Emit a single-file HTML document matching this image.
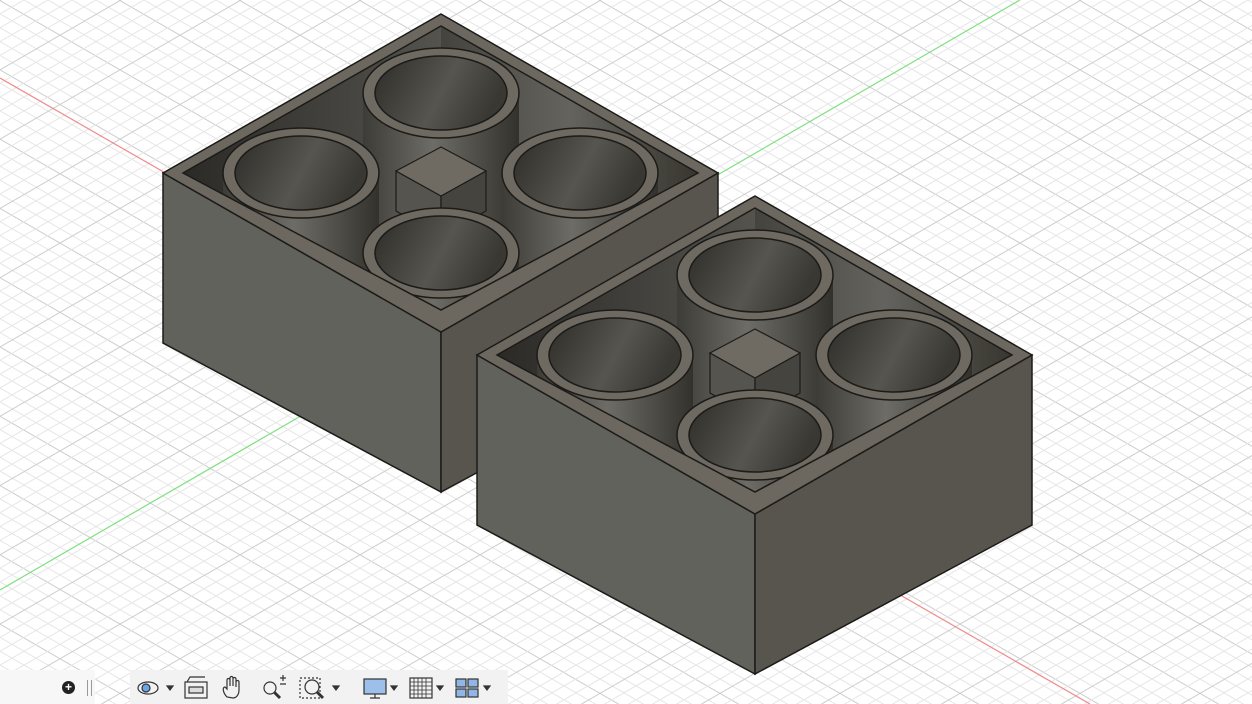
<!DOCTYPE html>
<html><head><meta charset="utf-8"><style>
html,body{margin:0;padding:0;width:1252px;height:704px;overflow:hidden;background:#fff;font-family:"Liberation Sans",sans-serif}
svg{position:absolute;left:0;top:0}
.tb{position:absolute;top:670px;height:34px;background:#f2f2f2}
</style></head><body>
<svg width="1252" height="704" viewBox="0 0 1252 704">
<defs>
<pattern id="g" width="2000" height="60" patternUnits="userSpaceOnUse">
<rect width="2000" height="60" fill="none"/>
<g stroke="#e6e6e6" stroke-width="1">
<line x1="0" y1="12" x2="2000" y2="12"/><line x1="0" y1="24" x2="2000" y2="24"/><line x1="0" y1="36" x2="2000" y2="36"/><line x1="0" y1="48" x2="2000" y2="48"/>
</g>
<line x1="0" y1="0.5" x2="2000" y2="0.5" stroke="#cdcdcd" stroke-width="1"/>
</pattern>
<pattern id="g1" href="#g" patternTransform="rotate(30)"/>
<pattern id="g2" href="#g" patternTransform="rotate(-30)"/>
<linearGradient id="cyl" x1="0" x2="1" y1="0" y2="0">
<stop offset="0" stop-color="#3e3c37"/><stop offset="0.45" stop-color="#6e6c66"/><stop offset="1" stop-color="#33312c"/>
</linearGradient>
<linearGradient id="hole" x1="0" x2="1" y1="0" y2="0.3">
<stop offset="0" stop-color="#2e2c28"/><stop offset="0.6" stop-color="#57554f"/><stop offset="1" stop-color="#3a3833"/>
</linearGradient>
<linearGradient id="inL" x1="0" x2="1" y1="0" y2="0">
<stop offset="0" stop-color="#2c2a26"/><stop offset="1" stop-color="#55534e"/>
</linearGradient>
<linearGradient id="inR" x1="0" x2="1" y1="0" y2="0">
<stop offset="0" stop-color="#45433e"/><stop offset="0.5" stop-color="#65635e"/><stop offset="1" stop-color="#38362f"/>
</linearGradient>
<clipPath id="inner"><polygon points="0,12 257,159 0,296 -258,159"/></clipPath>
<g id="cylinder">
<rect x="-78" y="0" width="156" height="160" fill="url(#cyl)"/>
<ellipse cx="0" cy="0" rx="78" ry="45" fill="#6e6a62" stroke="#1c1b18" stroke-width="1.5"/>
<ellipse cx="0" cy="0" rx="66" ry="37" fill="url(#hole)" stroke="#1c1b18" stroke-width="1.5"/>
</g>
<g id="box">
<polygon points="0,0 277,159 277,329 0,478 -278,329 -278,159" fill="#55524c"/>
<polygon points="-278,159 0,318 0,478 -278,329" fill="#62625d" stroke="#1c1b18" stroke-width="1.5"/>
<polygon points="0,318 277,159 277,329 0,478" fill="#58554e" stroke="#1c1b18" stroke-width="1.5"/>
<polygon points="0,0 277,159 0,318 -278,159" fill="#6c685f" stroke="#1c1b18" stroke-width="1.5"/>
<g clip-path="url(#inner)">
<polygon points="0,12 257,159 0,296 -258,159" fill="#2f2d29"/>
<polygon points="0,12 0,300 -258,300 -258,159" fill="url(#inL)"/>
<polygon points="0,12 257,159 257,300 0,300" fill="url(#inR)"/>
<use href="#cylinder" x="0" y="79"/>
<polygon points="-45,157 0,182 0,222 -45,197" fill="#56544f" stroke="#1c1b18" stroke-width="1.2"/>
<polygon points="45,157 0,182 0,222 45,197" fill="#46443f" stroke="#1c1b18" stroke-width="1.2"/>
<polygon points="0,133 45,157 0,182 -45,157" fill="#6f6b62" stroke="#1c1b18" stroke-width="1.2"/>
<use href="#cylinder" x="-140" y="159"/>
<use href="#cylinder" x="139" y="159"/>
<use href="#cylinder" x="0" y="239"/>
</g>
<polygon points="0,12 257,159 0,296 -258,159" fill="none" stroke="#1c1b18" stroke-width="1.5"/>
</g>
</defs>
<rect width="1252" height="704" fill="#fff"/>
<rect width="1252" height="704" fill="url(#g1)"/>
<rect width="1252" height="704" fill="url(#g2)"/>
<line x1="0" y1="78" x2="1090" y2="704" stroke="#f08a8a" stroke-width="1.2"/>
<line x1="0" y1="590" x2="1020" y2="0" stroke="#7fe07f" stroke-width="1.2"/>
<use href="#box" x="441" y="14"/>
<use href="#box" x="755" y="196"/>
</svg>
<div class="tb" style="left:0;width:95px;background:#f7f7f7"></div>
<div style="position:absolute;left:62px;top:681px;width:13px;height:13px;border-radius:50%;background:#222;color:#fff;font-size:12px;line-height:13px;text-align:center;font-weight:bold">+</div>
<div style="position:absolute;left:87px;top:680px;width:3px;height:16px;border-left:1px solid #999;border-right:1px solid #999"></div>
<div class="tb" style="left:130px;width:378px"></div>
<svg width="1252" height="704" viewBox="0 0 1252 704">
<g stroke="#333" fill="none" stroke-width="1.2">
<ellipse cx="148" cy="688" rx="10" ry="6"/><circle cx="146" cy="688" r="4" fill="#6aa6e8"/>
<path d="M167 686 l6 0 l-3 4z" fill="#333"/>
<rect x="185" y="682" width="22" height="16"/><rect x="189" y="687" width="14" height="6" fill="#ddd"/><path d="M187 682 l3 -5 h15"/>
<path d="M227 697 c-4 -4 -5 -10 -2 -10 l2 2 v-9 a1.5 1.5 0 0 1 3 0 v6 v-8 a1.5 1.5 0 0 1 3 0 v8 v-7 a1.5 1.5 0 0 1 3 0 v8 v-5 a1.5 1.5 0 0 1 3 0 v8 c0 5 -3 8 -6 8z"/>
<circle cx="270" cy="688" r="6"/><path d="M274 692 l6 6" stroke-width="3"/><path d="M280 678 h6 M283 675 v6 M280 684 h6"/>
<rect x="300" y="678" width="20" height="20" stroke-dasharray="2 2"/><circle cx="312" cy="687" r="7"/><path d="M317 692 l6 6" stroke-width="3"/>
<path d="M333 686 l6 0 l-3 4z" fill="#333"/>
<rect x="364" y="679" width="22" height="15" fill="#9cc0ea"/><path d="M370 698 h10 M375 694 v4"/>
<path d="M391 686 l6 0 l-3 4z" fill="#333"/>
<rect x="410" y="678" width="22" height="20"/><path d="M414 678v20M418 678v20M422 678v20M426 678v20M410 682h22M410 686h22M410 690h22M410 694h22" stroke-width="0.8"/>
<path d="M437 686 l6 0 l-3 4z" fill="#333"/>
<rect x="456" y="679" width="10" height="8" fill="#8fb6e6"/><rect x="468" y="679" width="10" height="8" fill="#8fb6e6"/><rect x="456" y="689" width="10" height="8" fill="#8fb6e6"/><rect x="468" y="689" width="10" height="8" fill="#8fb6e6"/>
<path d="M484 686 l6 0 l-3 4z" fill="#333"/>
</g>
</svg>
</body></html>
